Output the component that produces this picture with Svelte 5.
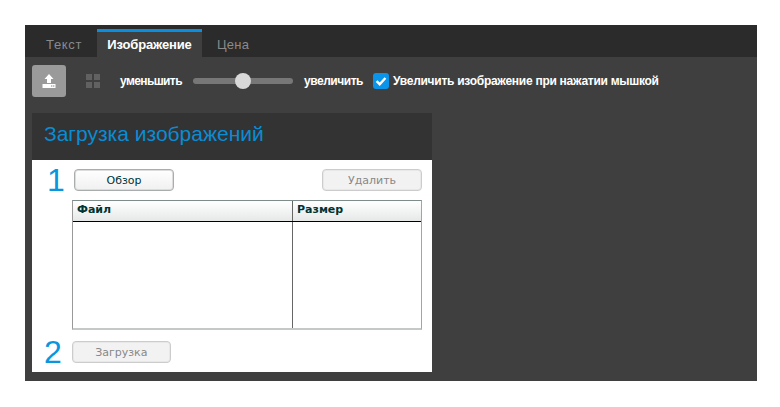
<script>
  const tabs = [
    { label: 'Текст', cls: 'off' },
    { label: 'Изображение', cls: 'on' },
    { label: 'Цена', cls: 'off2' }
  ];
</script>

<div class="page">
  <div class="app">
    <div class="tabs">
      {#each tabs as t}
        <div class="tab {t.cls}">{t.label}</div>
      {/each}
    </div>
    <div class="toolbar">
      <div class="upload">
        <svg width="16" height="16" viewBox="0 0 16 16">
          <path d="M8 1 L12.5 6 H10 V10 H6 V6 H3.5 Z" fill="#fff" />
          <path d="M1.5 11 H14.5 V15 H1.5 Z" fill="#fff" />
          <rect x="10" y="12.4" width="1.4" height="1.2" fill="#999" />
          <rect x="12" y="12.4" width="1.4" height="1.2" fill="#999" />
        </svg>
      </div>
      <div class="grid"><i></i><i></i><i></i><i></i></div>
      <span class="lbl shrink">уменьшить</span>
      <div class="slider"><div class="thumb"></div></div>
      <span class="lbl grow">увеличить</span>
      <div class="check">
        <svg width="16" height="16" viewBox="0 0 16 16">
          <path d="M3.6 8.2 L6.7 11.2 L12.4 5" fill="none" stroke="#fff" stroke-width="2.4" />
        </svg>
      </div>
      <span class="lbl zoom">Увеличить изображение при нажатии мышкой</span>
    </div>
    <div class="panel">
      <div class="head">Загрузка изображений</div>
      <div class="body">
        <div class="row one">
          <span class="num">1</span>
          <div class="btn browse">Обзор</div>
          <div class="btn dis del">Удалить</div>
        </div>
        <div class="table">
          <div class="thead">
            <div class="c1">Файл</div>
            <div class="c2">Размер</div>
          </div>
          <div class="tbody">
            <div class="c1"></div>
            <div class="c2"></div>
          </div>
        </div>
        <div class="row two">
          <span class="num">2</span>
          <div class="btn dis load">Загрузка</div>
        </div>
      </div>
    </div>
  </div>
</div>

<style>
  :global(body) { margin: 0; background: #fff; }
  .page { padding: 25px 23px 26px 25px; height: 356px; }
  .app { background: #3f3f3f; height: 356px; font-family: "Liberation Sans", Arial, sans-serif; }
  .tabs { display: flex; height: 32px; background: #2b2b2b; padding-left: 10px; box-sizing: border-box; padding-top: 4px; }
  .tab { font-size: 13px; line-height: 26px; padding-top: 3px; box-sizing: border-box; height: 28px; }
  .off { color: #8a8a8a; padding-left: 11px; width: 62px; letter-spacing: 0.7px; }
  .on { color: #fff; font-weight: bold; background: #3f3f3f; border-top: 3px solid #0a8fe0; width: 105px; padding-top: 0; text-align: center; letter-spacing: -0.15px; }
  .off2 { color: #8a8a8a; padding-left: 15px; letter-spacing: 0.2px; }
  .toolbar { display: flex; align-items: center; height: 32px; margin-top: 8px; padding-left: 7px; }
  .upload { width: 34px; height: 32px; background: #9a9a9a; border-radius: 3px; display: flex; align-items: center; justify-content: center; }
  .grid { display: grid; grid-template-columns: 6px 6px; grid-auto-rows: 6px; gap: 2px; margin-left: 20px; }
  .grid i { background: #616161; display: block; }
  .lbl { color: #fff; font-size: 12px; font-weight: bold; white-space: nowrap; }
  .shrink { margin-left: 20px; letter-spacing: -0.6px; }
  .slider { width: 100px; height: 6px; background: #777; border-radius: 3px; margin-left: 11px; position: relative; }
  .thumb { position: absolute; left: 42px; top: -5px; width: 16px; height: 16px; border-radius: 50%; background: #d9d9d9; }
  .grow { margin-left: 11px; letter-spacing: -0.45px; }
  .check { width: 16px; height: 16px; background: #0a95eb; border-radius: 3px; margin-left: 10px; }
  .zoom { margin-left: 4px; letter-spacing: -0.27px; }
  .panel { width: 400px; margin: 16px 0 0 7px; }
  .head { height: 47px; background: #333; color: #0a8cd4; font-size: 21px; line-height: 42px; padding-left: 12px; box-sizing: border-box; }
  .body { background: #fff; height: 212px; box-sizing: border-box; padding-top: 9px; }
  .row { display: flex; align-items: center; }
  .num { color: #0a96de; font-size: 32px; line-height: 22px; }
  .one { height: 22px; padding-left: 15px; }
  .one .num { width: 18px; }
  .two { height: 22px; margin-top: 11px; padding-left: 12px; }
  .btn { height: 22px; box-sizing: border-box; border: 1px solid #a9adad; border-radius: 4px; font-family: "DejaVu Sans", sans-serif; font-size: 11px; line-height: 21px; text-align: center; background: linear-gradient(#fff, #f0f0f0); color: #033; box-shadow: inset 0 0 0 1px #dcdcdc; }
  .browse { width: 100px; margin-left: 9px; }
  .del { width: 100px; margin-left: auto; margin-right: 10px; }
  .load { width: 99px; margin-left: 10px; }
  .dis { color: #888; border-color: #ccc; background: #f2f2f2; box-shadow: inset 0 0 0 1px #e8e8e8; }
  .table { margin: 9px 10px 0 40px; height: 130px; box-sizing: border-box; border: 1px solid #9aa8a8; border-top-color: #7f8c8c; border-bottom: 2px solid #c4c8c8; border-left-color: #999; }
  .thead { display: flex; height: 21px; border-bottom: 1px solid #000; box-sizing: border-box; background: linear-gradient(#fff, #e6e8e8); font-family: "DejaVu Sans", sans-serif; font-weight: bold; font-size: 11px; color: #033; line-height: 18px; }
  .tbody { display: flex; height: 106px; }
  .c1 { width: 219px; box-sizing: border-box; padding-left: 4px; flex: none; }
  .c2 { flex: 1; border-left: 1px solid #666; padding-left: 4px; }
</style>
